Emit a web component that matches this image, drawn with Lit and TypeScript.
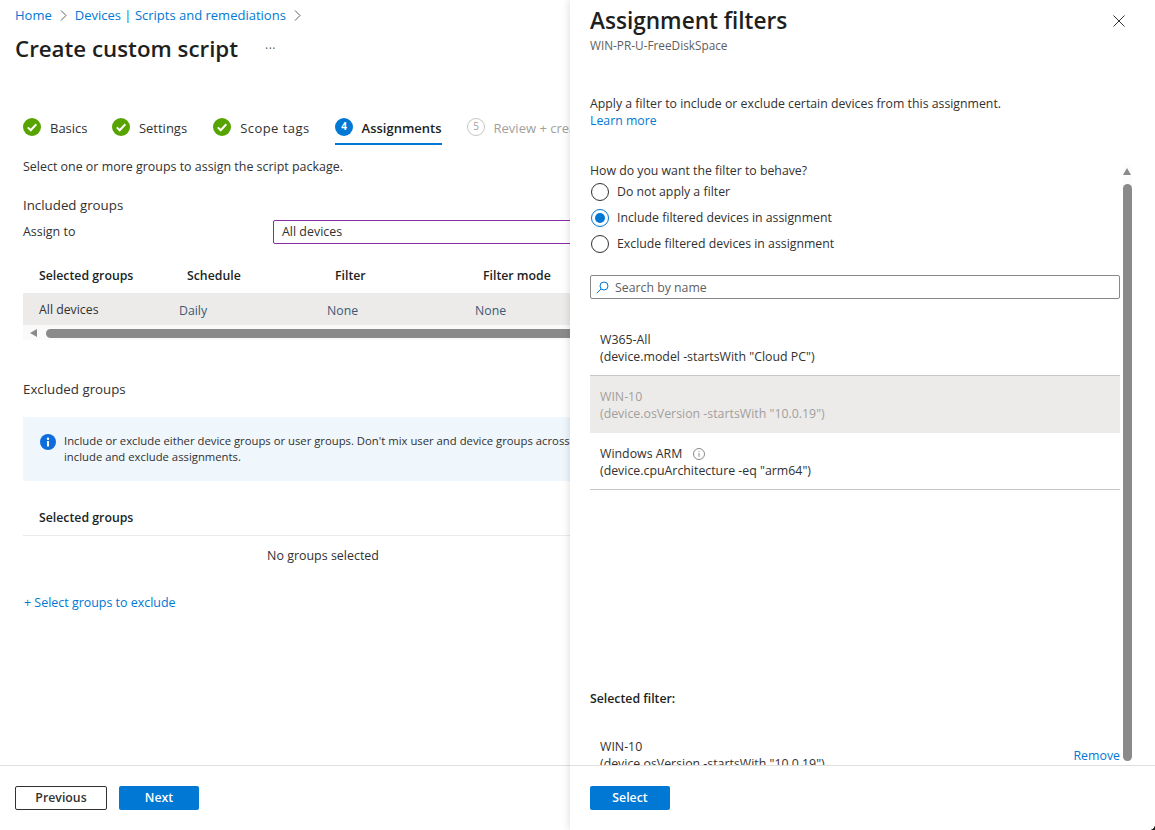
import { LitElement, html, css, svg } from "lit";
import { customElement } from "lit/decorators.js";

const check = svg`<svg class="step-icon" viewBox="0 0 18 18"><circle cx="9" cy="9" r="9" fill="#57a300"/><path d="M4.8 9.4l2.9 2.9 5.6-6.1" fill="none" stroke="#fff" stroke-width="2"/></svg>`;

const filters = [
  { name: "W365-All", rule: '(device.model -startsWith "Cloud PC")' },
  { name: "WIN-10", rule: '(device.osVersion -startsWith "10.0.19")', picked: true },
  { name: "Windows ARM", rule: '(device.cpuArchitecture -eq "arm64")', info: true },
];

const radios = [
  { label: "Do not apply a filter" },
  { label: "Include filtered devices in assignment", on: true },
  { label: "Exclude filtered devices in assignment" },
];

@customElement("app-root")
export class AppRoot extends LitElement {
  static styles = css`
    :host {
      display: block;
      position: relative;
      width: 1155px;
      height: 830px;
      overflow: hidden;
      background: #fff;
      color: #323130;
      font-family: "Open Sans", "Noto Sans", sans-serif;
      font-size: 12.3px;
      line-height: 18px;
    }
    a { color: #0078d4; text-decoration: none; }
    .blade {
      width: 570px;
      height: 830px;
      display: flex;
      flex-direction: column;
      overflow: hidden;
    }
    .content { flex: 1; min-height: 0; padding: 6px 0 0 23px; font-size: 12.45px; }
    .crumbs { display: flex; align-items: center; margin-left: -8px; height: 18px; gap: 8px; font-size: 13px; }
    .crumbs svg { width: 7px; height: 11px; }
    .title-row { display: flex; align-items: center; margin: 7px 0 0 -8px; height: 36px; }
    h1 { margin: 0; font-size: 22.3px; font-weight: 600; color: #201f1e; line-height: 36px; white-space: nowrap; }
    .more { margin-left: 27px; color: #605e5c; font-size: 12px; letter-spacing: 0.5px; }
    .steps { display: flex; margin-top: 44px; height: 34px; white-space: nowrap; font-size: 13px; }
    .step { display: flex; align-items: center; gap: 9px; height: 32px; margin-right: 25px; }
    .step:first-child { margin-right: 24.4px; }
    .step:nth-child(3) { margin-left: 1px; letter-spacing: 0.45px; }
    .step span { padding-top: 2px; }
    .step-icon { width: 18px; height: 18px; flex: none; }
    .step.active { border-bottom: 2px solid #0078d4; font-weight: 600; color: #201f1e; }
    .step.off { color: #a19f9d; }
    .lead { margin: 13px 0 0; }
    .label { margin: 20px 0 0; font-size: 13.3px; }
    .assign { display: flex; align-items: center; margin-top: 6px; height: 24px; }
    .assign span { width: 250px; flex: none; }
    .select {
      flex: none;
      box-sizing: border-box;
      width: 500px;
      height: 24px;
      padding-left: 8px;
      border: 1px solid #8a2da5;
      border-radius: 2px;
      line-height: 22px;
    }
    .cols { display: grid; grid-template-columns: repeat(4, 148px); padding-left: 16px; width: 700px; font-size: 12.3px; }
    .head { margin-top: 23px; height: 19px; font-weight: 600; color: #201f1e; }
    .row {
      margin-top: 7px;
      height: 32px;
      width: 700px;
      background: #edebe9;
      display: grid;
      grid-template-columns: 140px repeat(3, 148px);
      padding-left: 16px;
      align-items: center;
      font-size: 12.3px;
    }
    .row span { padding-top: 2px; }
    .row span + span { color: #3b5a78; padding-top: 4px; }
    .hbar { display: flex; align-items: center; height: 15px; padding-top: 1px; box-sizing: border-box; background: #fafafa; width: 700px; }
    .hbar i { display: block; width: 0; height: 0; margin-left: 7px; border: 4px solid transparent; border-left: 0; border-right: 7px solid #8a8a8a; }
    .hbar b { display: block; margin-left: 9px; height: 9px; width: 640px; border-radius: 5px; background: #8a8a8a; }
    .excl { margin: 40px 0 0; font-size: 13.3px; }
    .info {
      margin-top: 19px;
      width: 700px;
      height: 64px;
      box-sizing: border-box;
      background: #eff6fc;
      display: flex;
      gap: 8px;
      padding: 16px 17px;
      font-size: 11.3px;
      line-height: 16px;
    }
    .info svg { width: 16px; height: 16px; flex: none; margin-top: 1px; }
    .info p { margin: 0; width: 540px; white-space: nowrap; }
    .head2 { margin-top: 28px; width: 600px; height: 27px; padding-left: 16px; box-sizing: border-box; border-bottom: 1px solid #edebe9; font-weight: 600; color: #201f1e; font-size: 12.3px; }
    .empty { width: 600px; text-align: center; margin-top: 11px; }
    .add { display: block; margin: 29px 0 0 1px; }
    .foot {
      flex: none;
      height: 65px;
      border-top: 1px solid #e1dfdd;
      display: flex;
      gap: 12px;
      padding: 20px 0 0 15px;
      box-sizing: border-box;
    }
    .foot.side { padding-left: 20px; }
    button {
      font: 600 12.3px/18px "Open Sans", "Noto Sans", sans-serif;
      height: 24px;
      padding: 0;
      border-radius: 2px;
      box-sizing: border-box;
      cursor: pointer;
    }
    .ghost { width: 92px; background: #fff; border: 1px solid #323130; color: #323130; }
    .primary { width: 80px; background: #0078d4; border: 0; color: #fff; }

    .panel {
      position: absolute;
      left: 570px;
      top: 0;
      width: 585px;
      height: 830px;
      background: #fff;
      box-shadow: 0 0 8px rgba(0, 0, 0, 0.16);
      display: flex;
      flex-direction: column;
    }
    .scroll { flex: 1; min-height: 0; overflow: hidden; padding: 5px 35px 0 20px; position: relative; }
    h2 { margin: 0; font-size: 22.6px; font-weight: 600; line-height: 32px; color: #201f1e; white-space: nowrap; }
    .sub { font-size: 11.8px; line-height: 16px; color: #605e5c; }
    .close { position: absolute; left: 543px; top: 15px; width: 12px; height: 12px; }
    .apply { margin: 42px 0 0; line-height: 17px; }
    .question { margin: 33px 0 0; }
    .radios { display: flex; flex-direction: column; gap: 8px; margin-top: 3px; }
    .radio { display: flex; align-items: center; gap: 8px; height: 18px; margin-left: 1px; }
    .dot { width: 18px; height: 18px; box-sizing: border-box; border: 1px solid #323130; border-radius: 50%; flex: none; display: grid; place-items: center; }
    .dot.on { border-color: #0078d4; }
    .dot.on::after { content: ""; width: 10px; height: 10px; border-radius: 50%; background: #0078d4; }
    .search {
      margin-top: 22px;
      height: 24px;
      box-sizing: border-box;
      border: 1px solid #8a8886;
      border-radius: 2px;
      display: flex;
      align-items: center;
      gap: 6px;
      padding: 1px 0 0 5px;
      color: #605e5c;
    }
    .search svg { width: 13px; height: 13px; }
    .list { margin-top: 20px; font-size: 12.35px; line-height: 17px; }
    .item { height: 57px; box-sizing: border-box; padding: 12px 10px 0; border-bottom: 1px solid #c8c6c4; }
    .item.picked { background: #edebe9; color: #a19f9d; border-bottom: 0; }
    .item-name { display: flex; align-items: center; gap: 11px; }
    .item-name svg { width: 12px; height: 12px; }
    .picked-title { margin: 200px 0 0; font-weight: 600; color: #201f1e; }
    .current { display: flex; justify-content: space-between; margin-top: 30px; padding-left: 10px; font-size: 12.35px; line-height: 17px; }
    .current a { align-self: flex-start; margin-top: 9px; }
    .vbar { position: absolute; left: 553px; top: 165px; width: 9px; height: 596px; background: #fcfcfc; }
    .vbar i { display: block; width: 0; height: 0; margin: 3px 0 0; border: 4.5px solid transparent; border-top: 0; border-bottom: 7px solid #8a8a8a; }
    .vbar b { display: block; height: 577px; margin-top: 9px; border-radius: 5px; background: #8a8a8a; }
    .corner { position: absolute; right: 0; bottom: 0; width: 5px; height: 5px; background: radial-gradient(circle at 0 0, transparent 4.5px, #201f1e 5px); }
  `;

  render() {
    return html`
      <div class="blade">
        <div class="content">
          <nav class="crumbs">
            <a href="#">Home</a>
            <svg viewBox="0 0 7 11"><path d="M1 .5l5 5-5 5" fill="none" stroke="#605e5c"/></svg>
            <a href="#">Devices | Scripts and remediations</a>
            <svg viewBox="0 0 7 11"><path d="M1 .5l5 5-5 5" fill="none" stroke="#605e5c"/></svg>
          </nav>
          <div class="title-row"><h1>Create custom script</h1><span class="more">···</span></div>

          <div class="steps">
            <div class="step">${check}<span>Basics</span></div>
            <div class="step">${check}<span>Settings</span></div>
            <div class="step">${check}<span>Scope tags</span></div>
            <div class="step active">
              <svg class="step-icon" viewBox="0 0 18 18"><circle cx="9" cy="9" r="9" fill="#0078d4"/><text x="9" y="12.4" text-anchor="middle" font-size="10" font-weight="700" fill="#fff">4</text></svg>
              <span>Assignments</span>
            </div>
            <div class="step off">
              <svg class="step-icon" viewBox="0 0 18 18"><circle cx="9" cy="9" r="8.5" fill="none" stroke="#c8c6c4"/><text x="9" y="12.4" text-anchor="middle" font-size="10" fill="#a19f9d">5</text></svg>
              <span>Review + create</span>
            </div>
          </div>

          <p class="lead">Select one or more groups to assign the script package.</p>
          <p class="label">Included groups</p>
          <div class="assign"><span>Assign to</span><div class="select">All devices</div></div>

          <div class="cols head"><span>Selected groups</span><span>Schedule</span><span>Filter</span><span>Filter mode</span></div>
          <div class="row"><span>All devices</span><span>Daily</span><span>None</span><span>None</span></div>
          <div class="hbar"><i></i><b></b></div>

          <p class="excl">Excluded groups</p>
          <div class="info">
            <svg viewBox="0 0 16 16"><circle cx="8" cy="8" r="8" fill="#0f6cdb"/><rect x="7" y="7" width="2" height="5.5" fill="#fff"/><circle cx="8" cy="4.7" r="1.2" fill="#fff"/></svg>
            <p>Include or exclude either device groups or user groups. Don't mix user and device groups across<br />include and exclude assignments.</p>
          </div>

          <div class="head2">Selected groups</div>
          <div class="empty">No groups selected</div>
          <a class="add" href="#">+ Select groups to exclude</a>
        </div>
        <div class="foot">
          <button class="ghost">Previous</button>
          <button class="primary">Next</button>
        </div>
      </div>

      <aside class="panel">
        <div class="scroll">
          <h2>Assignment filters</h2>
          <div class="sub">WIN-PR-U-FreeDiskSpace</div>
          <p class="apply">Apply a filter to include or exclude certain devices from this assignment.<br /><a href="#">Learn more</a></p>
          <p class="question">How do you want the filter to behave?</p>
          <div class="radios">
            ${radios.map(
              (r) => html`<div class="radio"><span class="dot ${r.on ? "on" : ""}"></span>${r.label}</div>`
            )}
          </div>
          <div class="search">
            <svg viewBox="0 0 13 13"><circle cx="8" cy="5" r="4" fill="none" stroke="#0078d4"/><path d="M5 8l-4.2 4.2" stroke="#0078d4" fill="none"/></svg>
            Search by name
          </div>
          <div class="list">
            ${filters.map(
              (f) => html`
                <div class="item ${f.picked ? "picked" : ""}">
                  <div class="item-name">
                    ${f.name}
                    ${f.info
                      ? html`<svg viewBox="0 0 12 12"><circle cx="6" cy="6" r="5.5" fill="none" stroke="#8a8886"/><path d="M6 5.2v3.6M6 3.2v1" stroke="#8a8886" fill="none"/></svg>`
                      : ""}
                  </div>
                  <div>${f.rule}</div>
                </div>
              `
            )}
          </div>
          <p class="picked-title">Selected filter:</p>
          <div class="current">
            <div>WIN-10<br />(device.osVersion -startsWith "10.0.19")</div>
            <a href="#">Remove</a>
          </div>
        </div>
        <div class="foot side"><button class="primary">Select</button></div>
        <svg class="close" viewBox="0 0 12 12"><path d="M.5.5l11 11M11.5.5l-11 11" stroke="#323130" fill="none"/></svg>
        <div class="vbar"><i></i><b></b></div>
        <div class="corner"></div>
      </aside>
    `;
  }
}
